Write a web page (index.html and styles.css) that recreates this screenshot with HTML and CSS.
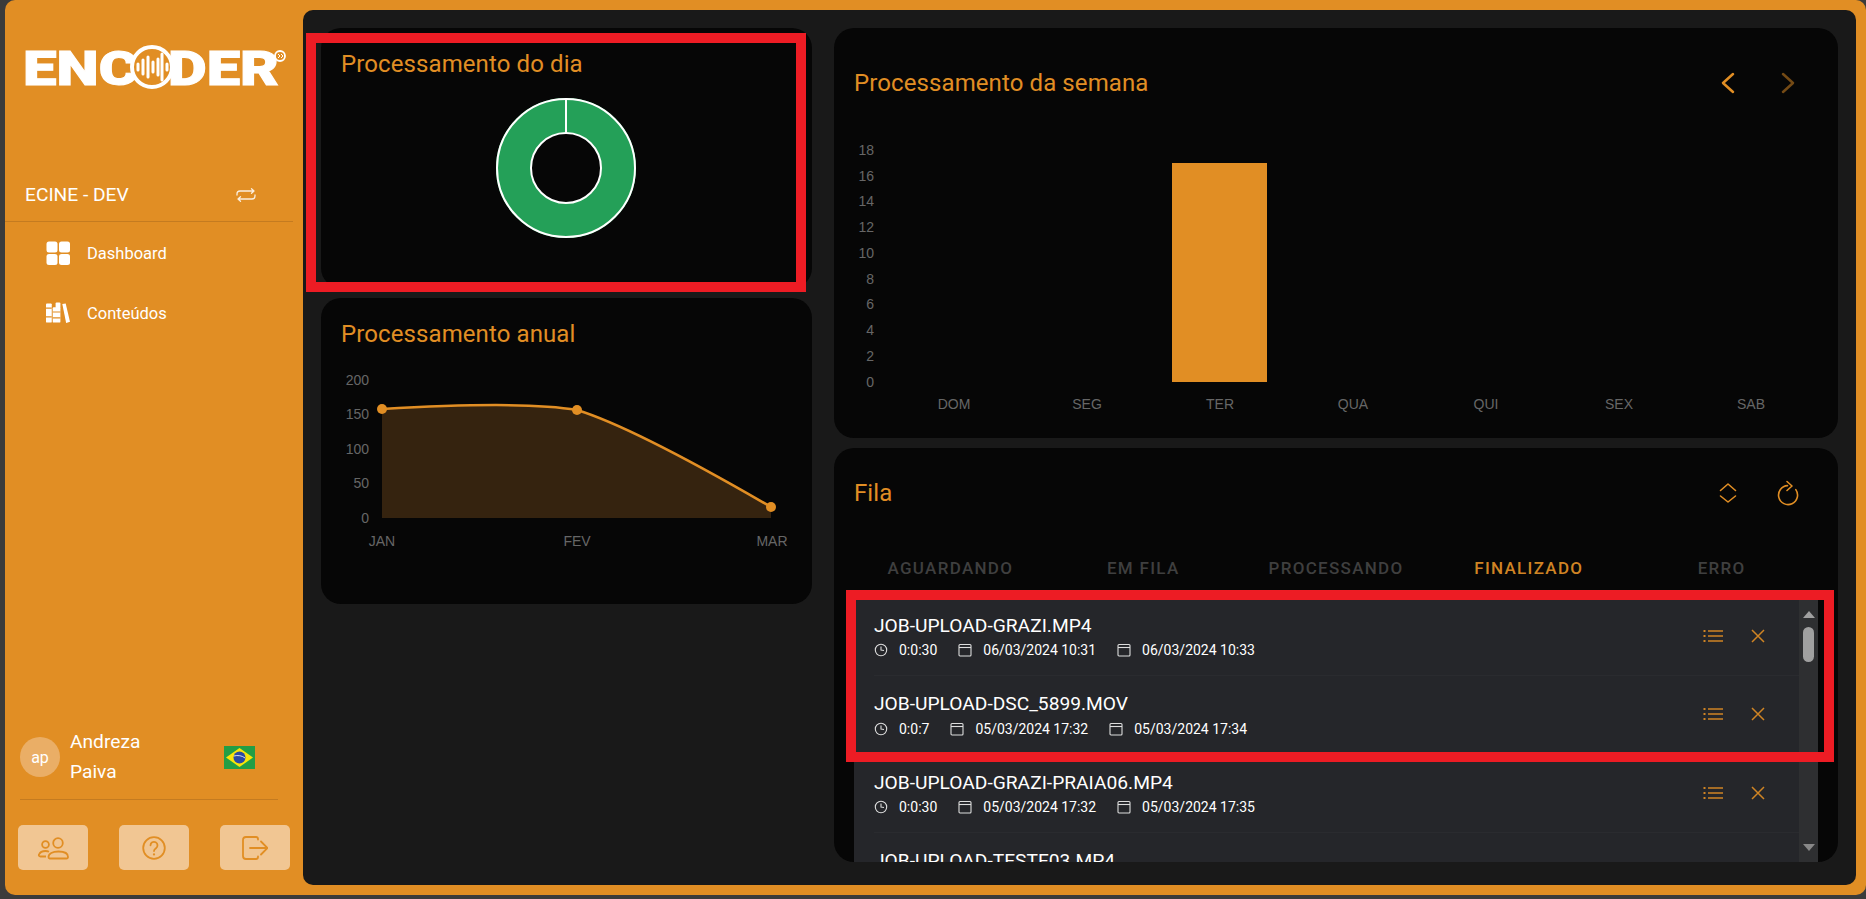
FILE: index.html
```html
<!DOCTYPE html>
<html lang="pt-BR">

<head>
  <meta charset="UTF-8" />
  <title>Encoder - Dashboard</title>

  <link rel="stylesheet" href="styles.css">
</head>

<body>
  <div class="app">
    <aside class="sidebar">
      <svg class="logo" viewBox="0 0 270 60" width="270" height="60">
        <text class="logo-text" x="3" y="45" textLength="115" lengthAdjust="spacingAndGlyphs">ENC</text>
        <text class="logo-text" x="148" y="45" textLength="111" lengthAdjust="spacingAndGlyphs">DER</text>
        <circle cx="132" cy="27" r="20" fill="#e18e24" stroke="#fff" stroke-width="4" />
        <g stroke="#fff" stroke-width="3" stroke-linecap="round">
          <path d="M118 24v6M123 20v14M128 17v20M133 22v10M138 19v16M142 14v26M147 24v6" />
        </g>
        <circle cx="260" cy="16" r="5" fill="none" stroke="#fff" stroke-width="1.800" />
        <path d="M258 14l2 2-2 2M261 14l2 2-2 2" fill="none" stroke="#fff" stroke-width="1" />
      </svg>

      <div class="account">
        <span>ECINE - DEV</span>
        <svg viewBox="0 0 20 14" width="20" height="14" fill="none" stroke="#fff" stroke-width="1.3" stroke-linecap="round" stroke-linejoin="round" opacity="0.85">
          <path d="M1 7V6a3 3 0 0 1 3-3h14M15.500 .8 18 3l-2.500 2.200" />
          <path d="M19 7v1a3 3 0 0 1-3 3H2M4.500 8.800 2 11l2.500 2.200" />
        </svg>
      </div>

      <nav class="nav">
        <a class="nav-item">
          <svg viewBox="0 0 24 24" width="24" height="24" fill="#fff">
            <rect x="0.500" y="0.500" width="11" height="11" rx="2.500" />
            <rect x="13" y="0.500" width="11" height="11" rx="2.500" />
            <rect x="0.500" y="13" width="11" height="11" rx="2.500" />
            <rect x="13" y="13" width="11" height="11" rx="2.500" />
          </svg>
          Dashboard
        </a>
        <a class="nav-item">
          <svg viewBox="0 0 25 22" width="24" height="22" fill="#fff">
            <rect x="0" y="1" width="6" height="20" rx="1" />
            <rect x="7" y="5" width="8" height="16" rx="1" />
            <rect x="10" y="0" width="5" height="6" rx="1" />
            <path d="M17 1.500 20.500 1 25 20l-4 1.500z" />
            <path d="M0 6h6M0 15h6M7 10h8M7 16h8" stroke="#e18e24" stroke-width="1.200" />
          </svg>
          Conteúdos
        </a>
      </nav>

      <div class="user">
        <span class="avatar">ap</span>
        <span class="user-name">Andreza<br>Paiva</span>
        <svg class="flag" viewBox="0 0 31 23" width="31" height="23">
          <rect width="31" height="23" fill="#229e45" />
          <path d="M15.500 2 29 11.500 15.500 21 2 11.500z" fill="#f8e509" />
          <circle cx="15.500" cy="11.500" r="6" fill="#2b49a3" />
          <path d="M9.800 10c4-1 8-.5 11.300 2" fill="none" stroke="#fff" stroke-width="0.800" />
        </svg>
      </div>

      <div class="tools">
        <button class="tool">
          <svg viewBox="0 0 32 24" width="32" height="24" fill="none" stroke="#e18e24" stroke-width="1.800">
            <circle cx="21" cy="7" r="4.800" />
            <circle cx="8.500" cy="8.500" r="3.400" />
            <path d="M12.500 22.500h17a1.500 1.500 0 0 0 1.500-1.500c0-3.500-3.500-5.500-9.500-5.500s-10 2-10 5.500a1.500 1.500 0 0 0 1 1.500z" />
            <path d="M9 20.500H3.500c-1.500 0-2-1-1.500-2 1-2.300 3-3.500 6.500-3.500 1.500 0 2.500.2 3.500.7" />
          </svg>
        </button>
        <button class="tool">
          <svg viewBox="0 0 24 24" width="24" height="24" fill="none" stroke="#e18e24" stroke-width="1.800" stroke-linecap="round">
            <circle cx="12" cy="12" r="10.800" />
            <path d="M8.500 9.300a3.500 3.500 0 1 1 5.500 2.900c-1.300.9-2 1.500-2 2.900" />
            <path d="M12 18.300v.2" stroke-width="2.200" />
          </svg>
        </button>
        <button class="tool">
          <svg viewBox="0 0 26 24" width="26" height="24" fill="none" stroke="#e18e24" stroke-width="1.800" stroke-linecap="round" stroke-linejoin="round">
            <path d="M16 3.500V2.800A2 2 0 0 0 14 1H4a3 3 0 0 0-3 3v16a3 3 0 0 0 3 3h10a2 2 0 0 0 2-1.800v-.7" />
            <path d="M8 12h17M19 5.500l6.500 6.500-6.500 6.500" />
          </svg>
        </button>
      </div>
    </aside>

    <main class="main">
      <div class="col-left">
        <section class="card card-day">
          <h2 class="card-title">Processamento do dia</h2>
          <svg class="donut" viewBox="0 0 142 142" width="142" height="142">
            <circle cx="71" cy="71" r="52.500" fill="none" stroke="#24a058" stroke-width="35" />
            <circle cx="71" cy="71" r="69" fill="none" stroke="#fff" stroke-width="2" />
            <circle cx="71" cy="71" r="35" fill="none" stroke="#fff" stroke-width="2" />
            <path d="M71 2v34" stroke="#fff" stroke-width="2" />
          </svg>
        </section>

        <section class="card card-year">
          <h2 class="card-title">Processamento anual</h2>
          <svg class="chart" viewBox="0 0 491 230" width="491" height="230">
            <path d="M61 49C130 45 210 42 256 50C305 65 400 118 450 147V158H61Z" fill="#35230f" />
            <path d="M61 49C130 45 210 42 256 50C305 65 400 118 450 147" fill="none" stroke="#e18e24" stroke-width="2.500" />
            <circle cx="61" cy="49" r="5" fill="#e18e24" />
            <circle cx="256" cy="50" r="5" fill="#e18e24" />
            <circle cx="450" cy="147" r="5" fill="#e18e24" />
            <g class="axis axis-y">
              <text x="48" y="25">200</text>
              <text x="48" y="59">150</text>
              <text x="48" y="94">100</text>
              <text x="48" y="128">50</text>
              <text x="48" y="163">0</text>
            </g>
            <g class="axis axis-x">
              <text x="61" y="186">JAN</text>
              <text x="256" y="186">FEV</text>
              <text x="451" y="186">MAR</text>
            </g>
          </svg>
        </section>
      </div>

      <div class="col-right">
        <section class="card card-week">
          <div class="card-head head-week">
            <h2 class="card-title">Processamento da semana</h2>
            <div class="head-icons">
              <svg viewBox="0 0 24 24" width="24" height="24" fill="none" stroke="#e18e24" stroke-width="2.500" stroke-linecap="round" stroke-linejoin="round">
                <path d="M17 3 7 12l10 9" />
              </svg>
              <svg class="dim" viewBox="0 0 24 24" width="24" height="24" fill="none" stroke="#e18e24" stroke-width="2.500" stroke-linecap="round" stroke-linejoin="round">
                <path d="M7 3l10 9-10 9" />
              </svg>
            </div>
          </div>
          <svg class="chart chart-week" viewBox="0 0 1004 300" width="1004" height="300">
            <rect x="338" y="33" width="95" height="219" fill="#e18e24" />
            <g class="axis axis-y">
              <text x="40" y="25">18</text>
              <text x="40" y="51">16</text>
              <text x="40" y="76">14</text>
              <text x="40" y="102">12</text>
              <text x="40" y="128">10</text>
              <text x="40" y="154">8</text>
              <text x="40" y="179">6</text>
              <text x="40" y="205">4</text>
              <text x="40" y="231">2</text>
              <text x="40" y="257">0</text>
            </g>
            <g class="axis axis-x">
              <text x="120" y="279">DOM</text>
              <text x="253" y="279">SEG</text>
              <text x="386" y="279">TER</text>
              <text x="519" y="279">QUA</text>
              <text x="652" y="279">QUI</text>
              <text x="785" y="279">SEX</text>
              <text x="917" y="279">SAB</text>
            </g>
          </svg>
        </section>

        <section class="card card-queue">
          <div class="card-head head-queue">
            <h2 class="card-title">Fila</h2>
            <div class="head-icons">
              <svg viewBox="0 0 24 24" width="24" height="24" fill="none" stroke="#e18e24" stroke-width="1.600" stroke-linecap="round" stroke-linejoin="round">
                <path d="M4.500 9.500 12 3l7.500 6.500M4.500 15 12 21l7.500-6" />
              </svg>
              <svg class="reload" viewBox="0 0 24 24" width="24" height="24" fill="none" stroke="#e18e24" stroke-width="1.600" stroke-linecap="round" stroke-linejoin="round">
                <path d="M11.500 4.600A9.500 9.500 0 1 0 19.800 8.600" />
                <path d="M11 .5 16 5l-5 4.500" />
              </svg>
            </div>
          </div>

          <div class="tabs">
            <span class="tab">AGUARDANDO</span>
            <span class="tab">EM FILA</span>
            <span class="tab">PROCESSANDO</span>
            <span class="tab active">FINALIZADO</span>
            <span class="tab">ERRO</span>
          </div>

          <div class="list">
            <div class="jobs">
              <div class="job">
                <div class="job-info">
                  <div class="job-name">JOB-UPLOAD-GRAZI.MP4</div>
                  <div class="job-meta">
                    <span class="meta"><svg class="ic"><use href="#clock" /></svg>0:0:30</span>
                    <span class="meta"><svg class="ic"><use href="#cal" /></svg>06/03/2024 10:31</span>
                    <span class="meta"><svg class="ic"><use href="#cal" /></svg>06/03/2024 10:33</span>
                  </div>
                </div>
                <svg class="act"><use href="#lines" /></svg>
                <svg class="act act-x"><use href="#cross" /></svg>
              </div>
              <div class="job">
                <div class="job-info">
                  <div class="job-name">JOB-UPLOAD-DSC_5899.MOV</div>
                  <div class="job-meta">
                    <span class="meta"><svg class="ic"><use href="#clock" /></svg>0:0:7</span>
                    <span class="meta"><svg class="ic"><use href="#cal" /></svg>05/03/2024 17:32</span>
                    <span class="meta"><svg class="ic"><use href="#cal" /></svg>05/03/2024 17:34</span>
                  </div>
                </div>
                <svg class="act"><use href="#lines" /></svg>
                <svg class="act act-x"><use href="#cross" /></svg>
              </div>
              <div class="job">
                <div class="job-info">
                  <div class="job-name">JOB-UPLOAD-GRAZI-PRAIA06.MP4</div>
                  <div class="job-meta">
                    <span class="meta"><svg class="ic"><use href="#clock" /></svg>0:0:30</span>
                    <span class="meta"><svg class="ic"><use href="#cal" /></svg>05/03/2024 17:32</span>
                    <span class="meta"><svg class="ic"><use href="#cal" /></svg>05/03/2024 17:35</span>
                  </div>
                </div>
                <svg class="act"><use href="#lines" /></svg>
                <svg class="act act-x"><use href="#cross" /></svg>
              </div>
              <div class="job">
                <div class="job-info">
                  <div class="job-name">JOB-UPLOAD-TESTE03.MP4</div>
                  <div class="job-meta">
                    <span class="meta"><svg class="ic"><use href="#clock" /></svg>0:0:30</span>
                  </div>
                </div>
              </div>
            </div>
            <div class="scroll">
              <span class="scroll-up"></span>
              <span class="scroll-thumb"></span>
              <span class="scroll-down"></span>
            </div>
          </div>
        </section>
      </div>
    </main>
  </div>

  <div class="mark mark-day"></div>
  <div class="mark mark-jobs"></div>

  <svg class="defs" width="0" height="0">
    <defs>
      <symbol id="clock" viewBox="0 0 14 14">
        <circle cx="7" cy="7" r="5.700" fill="none" stroke="#ddd" stroke-width="1.100" />
        <path d="M7 3.500V7l3 .5" fill="none" stroke="#ddd" stroke-width="1.100" />
      </symbol>
      <symbol id="cal" viewBox="0 0 14 14">
        <rect x="1" y="1.500" width="12" height="11.500" rx="1" fill="none" stroke="#ddd" stroke-width="1.100" />
        <path d="M1 4.500h12" stroke="#ddd" stroke-width="1.100" />
      </symbol>
      <symbol id="lines" viewBox="0 0 20 14">
        <path d="M5 2h15M5 7h15M5 12h15" stroke="#d08424" stroke-width="1.600" />
        <path d="M.5 2h2M.5 7h2M.5 12h2" stroke="#d08424" stroke-width="2.200" />
      </symbol>
      <symbol id="cross" viewBox="0 0 14 14">
        <path d="M1 1l12 12M13 1 1 13" stroke="#d08424" stroke-width="1.500" />
      </symbol>
    </defs>
  </svg>
</body>

</html>
```

FILE: styles.css
```css
html,
body {
  margin: 0;
  height: 100%;
  overflow: hidden;
}

body {
  background-color: #3b3b3b;
  font-family: Roboto, "Liberation Sans", sans-serif;
  color: #fff;
}

.app {
  display: flex;
  width: 1861px;
  height: 895px;
  margin-left: 5px;
  background-color: #e18e24;
  border-radius: 10px;
}

/* barra lateral */
.sidebar {
  display: flex;
  flex-direction: column;
  flex: none;
  width: 298px;
}

.logo {
  display: block;
  margin: 40px 0 0 15px;
}

.logo-text {
  font-family: Roboto, sans-serif;
  font-size: 49px;
  font-weight: 900;
  fill: #fff;
  stroke: #fff;
  stroke-width: 1;
}

.account {
  display: flex;
  align-items: center;
  justify-content: space-between;
  box-sizing: border-box;
  width: 288px;
  height: 54px;
  margin-top: 68px;
  padding: 0 37px 0 20px;
  border-bottom: 1px solid #c47b20;
  font-size: 19.200px;
}

.nav {
  margin-top: 1px;
}

.nav-item {
  display: flex;
  align-items: center;
  gap: 17px;
  height: 60px;
  padding-left: 41px;
  font-size: 16.500px;
}

.user {
  display: flex;
  align-items: center;
  gap: 10px;
  margin: auto 25px 0 15px;
  padding-bottom: 12px;
  border-bottom: 1px solid #c47b20;
}

.avatar {
  display: flex;
  align-items: center;
  justify-content: center;
  width: 40px;
  height: 40px;
  border-radius: 50%;
  background-color: #eaae66;
  font-size: 16px;
}

.user-name {
  font-size: 19.200px;
  line-height: 30px;
}

.flag {
  margin: 0 23px 0 auto;
}

.tools {
  display: flex;
  justify-content: space-between;
  width: 272px;
  margin: 25px 0 25px 13px;
}

.tool {
  display: flex;
  align-items: center;
  justify-content: center;
  width: 70px;
  height: 45px;
  padding: 0;
  border: 0;
  border-radius: 5px;
  background-color: #f1c693;
}

/* area principal */
.main {
  display: flex;
  gap: 22px;
  box-sizing: border-box;
  width: 1553px;
  height: 875px;
  margin-top: 10px;
  padding: 18px 18px 23px;
  background-color: #191919;
  border-radius: 10px;
}

.col-left,
.col-right {
  display: flex;
  flex-direction: column;
  gap: 10px;
}

.col-left {
  width: 491px;
}

.col-right {
  width: 1004px;
}

.card {
  background-color: #060606;
  border-radius: 20px;
}

.card-title {
  margin: 0;
  color: #e18e24;
  font-size: 24px;
  font-weight: 400;
  letter-spacing: 0.100px;
  line-height: 28px;
}

.card-day {
  height: 260px;
  box-sizing: border-box;
  padding-top: 22px;
}

.card-day .card-title,
.card-year .card-title {
  padding-left: 20px;
}

.donut {
  display: block;
  margin: 19px 0 0 174px;
}

.card-year {
  height: 306px;
  box-sizing: border-box;
  padding-top: 22px;
}

.chart {
  display: block;
  margin-top: 12px;
}

.axis text {
  font-family: "Liberation Sans", sans-serif;
  font-size: 14px;
  fill: #666;
}

.axis-y text {
  text-anchor: end;
}

.axis-x text {
  text-anchor: middle;
}

.card-head {
  display: flex;
  align-items: center;
  justify-content: space-between;
  padding-left: 20px;
}

.head-icons {
  display: flex;
  gap: 36px;
  padding-right: 38px;
}

.dim {
  opacity: 0.5;
}

.reload {
  overflow: visible;
}

.card-week {
  height: 410px;
}

.head-week {
  padding-top: 41px;
}

.chart-week {
  margin-top: 33px;
}

/* fila */
.card-queue {
  display: flex;
  flex-direction: column;
  height: 414px;
}

.head-queue {
  padding-top: 31px;
}

.tabs {
  display: flex;
  height: 48px;
  margin: 37px 20px 0;
}

.tab {
  flex: 1;
  color: #3f3f3f;
  font-size: 17px;
  font-weight: 500;
  letter-spacing: 1.300px;
  line-height: 48px;
  text-align: center;
}

.tab.active {
  color: #d08424;
}

.list {
  display: flex;
  flex: 1;
  min-height: 0;
  margin: 5px 20px 0;
  overflow: hidden;
  background-color: #25262a;
}

.jobs {
  flex: 1;
  overflow: hidden;
}

.job {
  display: flex;
  align-items: center;
  box-sizing: border-box;
  height: 78.500px;
  margin-left: 20px;
  padding-right: 34px;
  border-bottom: 1px solid #2a2b2f;
}

.job-info {
  flex: 1;
  padding-top: 1.500px;
}

.job-name {
  font-size: 19.200px;
  line-height: 22px;
}

.job-meta {
  display: flex;
  gap: 21px;
  margin-top: 5.500px;
  font-size: 14px;
  line-height: 16px;
}

.meta {
  display: flex;
  align-items: center;
  gap: 11px;
}

.ic {
  width: 14px;
  height: 14px;
}

.act {
  width: 20px;
  height: 14px;
}

.act-x {
  width: 14px;
  margin-left: 28px;
}

.scroll {
  display: flex;
  flex-direction: column;
  align-items: center;
  flex: none;
  width: 19px;
  background-color: #2e2f31;
}

.scroll-up {
  width: 0;
  height: 0;
  margin-top: 14px;
  border-left: 6.500px solid transparent;
  border-right: 6.500px solid transparent;
  border-bottom: 7px solid #a0a0a0;
}

.scroll-thumb {
  width: 11px;
  height: 35px;
  margin-top: 9px;
  border-radius: 5.500px;
  background-color: #a0a0a0;
}

.scroll-down {
  width: 0;
  height: 0;
  margin-top: 182px;
  border-left: 6.500px solid transparent;
  border-right: 6.500px solid transparent;
  border-top: 7px solid #888;
}

/* marcacoes vermelhas sobre a tela */
.mark {
  position: absolute;
  box-sizing: border-box;
  border: 10px solid #ed1c24;
}

.mark-day {
  top: 33px;
  left: 306px;
  width: 500px;
  height: 259px;
}

.mark-jobs {
  top: 590px;
  left: 846px;
  width: 988px;
  height: 172px;
}

.defs {
  position: absolute;
}
```
